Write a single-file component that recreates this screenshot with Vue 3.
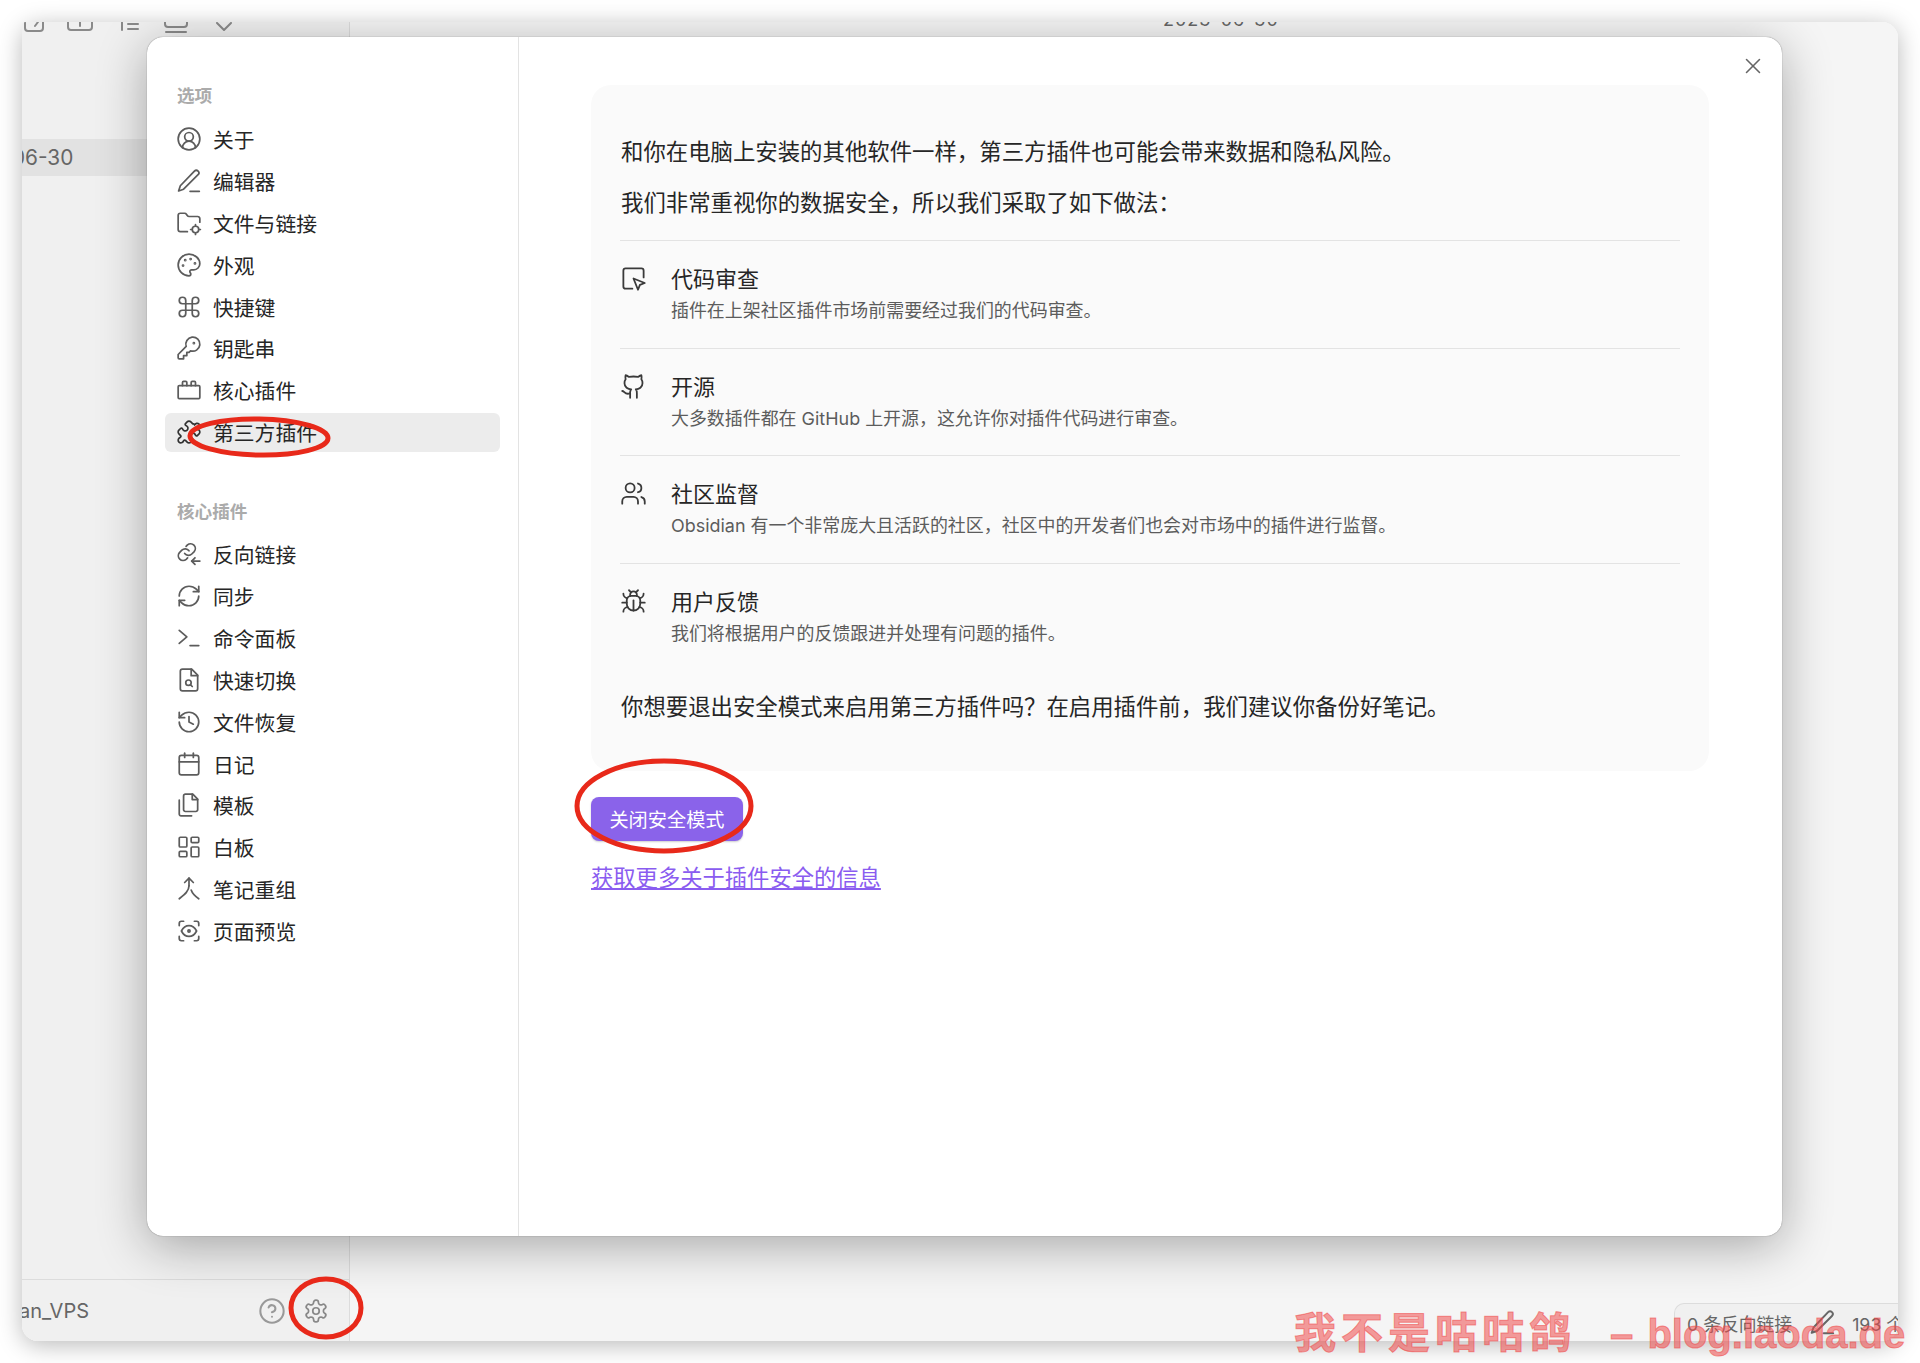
<script setup>
const icons = {
  about: '<path d="M18 20a6 6 0 0 0-12 0"/><circle cx="12" cy="10" r="4"/><circle cx="12" cy="12" r="10"/>',
  editor: '<path d="M13 21.5h8.5"/><path d="M17 2.8a2.4 2.4 0 0 1 3.4 3.4L7 19.6l-4.6 1.6L4 16.4Z"/>',
  files: '<circle cx="18" cy="18" r="3"/><path d="M10.5 20H4a2 2 0 0 1-2-2V5a2 2 0 0 1 2-2h3.9a2 2 0 0 1 1.69.9l.81 1.2a2 2 0 0 0 1.67.9H20a2 2 0 0 1 2 2v3.3"/><path d="M18 13.5V15M18 21v1.5M13.5 18H15M21 18h1.5"/>',
  palette: '<circle cx="13.5" cy="6.5" r=".5"/><circle cx="17.5" cy="10.5" r=".5"/><circle cx="8.5" cy="7.5" r=".5"/><circle cx="6.5" cy="12.5" r=".5"/><path d="M12 2C6.5 2 2 6.5 2 12s4.5 10 10 10c.926 0 1.648-.746 1.648-1.688 0-.437-.18-.835-.437-1.125-.29-.289-.438-.652-.438-1.125a1.64 1.64 0 0 1 1.668-1.668h1.996c3.051 0 5.555-2.503 5.555-5.554C21.965 6.012 17.461 2 12 2z"/>',
  command: '<path d="M15 6v12a3 3 0 1 0 3-3H6a3 3 0 1 0 3 3V6a3 3 0 1 0-3 3h12a3 3 0 1 0-3-3"/>',
  key: '<path d="M2 18v3c0 .6.4 1 1 1h4v-3h3v-3h2l1.4-1.4a6.5 6.5 0 1 0-4-4Z"/><circle cx="16.5" cy="7.5" r=".5"/>',
  core: '<path d="M3 8h18a1 1 0 0 1 1 1v10a1 1 0 0 1-1 1H3a1 1 0 0 1-1-1V9a1 1 0 0 1 1-1Z"/><path d="M6 8V5a1 1 0 0 1 1-1h2a1 1 0 0 1 1 1v3"/><path d="M14 8V5a1 1 0 0 1 1-1h2a1 1 0 0 1 1 1v3"/>',
  puzzle: '<path d="M19.439 7.85c-.049.322.059.648.289.878l1.568 1.568c.47.47.706 1.087.706 1.704s-.235 1.233-.706 1.704l-1.611 1.611a.98.98 0 0 1-.837.276c-.47-.07-.802-.48-.968-.925a2.501 2.501 0 1 0-3.214 3.214c.446.166.855.497.925.968a.979.979 0 0 1-.276.837l-1.61 1.61a2.404 2.404 0 0 1-1.705.707 2.402 2.402 0 0 1-1.704-.706l-1.568-1.568a1.026 1.026 0 0 0-.877-.29c-.493.074-.84.504-1.02.968a2.5 2.5 0 1 1-3.237-3.237c.464-.18.894-.527.967-1.02a1.026 1.026 0 0 0-.289-.877l-1.568-1.568A2.402 2.402 0 0 1 1.998 12c0-.617.236-1.234.706-1.704L4.23 8.77c.24-.24.581-.353.917-.303.515.077.877.528 1.073 1.01a2.5 2.5 0 1 0 3.259-3.259c-.482-.196-.933-.558-1.01-1.073-.05-.336.062-.676.303-.917l1.525-1.525A2.402 2.402 0 0 1 12 1.998c.617 0 1.234.236 1.704.706l1.568 1.568c.23.23.556.338.877.29.493-.074.84.504 1.02.968a2.5 2.5 0 1 1 3.237 3.237c-.464.18-.894.527-.967 1.02Z"/>',
  backlink: '<path d="M8 11.5a4.4 4.4 0 0 0 6.6.5l2.2-2.2a4.4 4.4 0 0 0-6.2-6.2L9.3 4.9"/><path d="M12 9a4.4 4.4 0 0 0-6.6-.5l-2.2 2.2a4.4 4.4 0 0 0 6.2 6.2l1.3-1.3"/><path d="M22 18.5h-7.5"/><path d="m17.5 15.5-3 3 3 3"/>',
  sync: '<path d="M3 12a9 9 0 0 1 9-9 9.75 9.75 0 0 1 6.74 2.74L21 8"/><path d="M21 3v5h-5"/><path d="M21 12a9 9 0 0 1-9 9 9.75 9.75 0 0 1-6.74-2.74L3 16"/><path d="M8 16H3v5"/>',
  terminal: '<polyline points="3 17 10 11 3 5"/><line x1="13" x2="21" y1="19" y2="19"/>',
  switcher: '<path d="M14.5 2H6a2 2 0 0 0-2 2v16a2 2 0 0 0 2 2h12a2 2 0 0 0 2-2V7.5L14.5 2z"/><polyline points="14 2 14 8 20 8"/><circle cx="11.5" cy="14.5" r="2.5"/><path d="M13.25 16.25 15 18"/>',
  history: '<path d="M3 12a9 9 0 1 0 9-9 9.75 9.75 0 0 0-6.74 2.74L3 8"/><path d="M3 3v5h5"/><path d="M12 7v5l4 2"/>',
  calendar: '<rect width="18" height="18" x="3" y="4" rx="2"/><line x1="16" x2="16" y1="2" y2="6"/><line x1="8" x2="8" y1="2" y2="6"/><line x1="3" x2="21" y1="10" y2="10"/>',
  template: '<path d="M15.5 2H8.6c-.4 0-.8.2-1.1.5-.3.3-.5.7-.5 1.1v12.8c0 .4.2.8.5 1.1.3.3.7.5 1.1.5h9.8c.4 0 .8-.2 1.1-.5.3-.3.5-.7.5-1.1V6.5L15.5 2z"/><path d="M3 7.6v12.8c0 .4.2.8.5 1.1.3.3.7.5 1.1.5h9.8"/><path d="M15 2v5h5"/>',
  canvas: '<rect width="7" height="9" x="3" y="3" rx="1"/><rect width="7" height="5" x="14" y="3" rx="1"/><rect width="7" height="9" x="14" y="12" rx="1"/><rect width="7" height="5" x="3" y="16" rx="1"/>',
  composer: '<path d="M12 2v7"/><path d="m8 6 4-4 4 4"/><path d="M12 9c0 5-4 8-9 12"/><path d="M14 13c1 3 4 6 7 8"/>',
  preview: '<path d="M3 7V5a2 2 0 0 1 2-2h2"/><path d="M17 3h2a2 2 0 0 1 2 2v2"/><path d="M21 17v2a2 2 0 0 1-2 2h-2"/><path d="M7 21H5a2 2 0 0 1-2-2v-2"/><circle cx="12" cy="12" r="1"/><path d="M5 12s2.5-5 7-5 7 5 7 5-2.5 5-7 5-7-5-7-5"/>',
  review: '<path d="M21 11V5a2 2 0 0 0-2-2H5a2 2 0 0 0-2 2v14a2 2 0 0 0 2 2h6"/><path d="m12 12 4 10 1.7-4.3L22 16Z"/>',
  github: '<path d="M15 22v-4a4.8 4.8 0 0 0-1-3.5c3 0 6-2 6-5.5.08-1.25-.27-2.48-1-3.5.28-1.15.28-2.35 0-3.5 0 0-1 0-3 1.5-2.64-.5-5.36-.5-8 0C6 2 5 2 5 2c-.3 1.15-.3 2.35 0 3.5A5.403 5.403 0 0 0 4 9c0 3.5 3 5.5 6 5.5-.39.49-.68 1.05-.85 1.65-.17.6-.22 1.23-.15 1.85v4"/><path d="M9 18c-4.51 2-5-2-7-2"/>',
  users: '<path d="M16 21v-2a4 4 0 0 0-4-4H6a4 4 0 0 0-4 4v2"/><circle cx="9" cy="7" r="4"/><path d="M22 21v-2a4 4 0 0 0-3-3.87"/><path d="M16 3.13a4 4 0 0 1 0 7.75"/>',
  bug: '<path d="m8 2 1.88 1.88"/><path d="M14.12 3.88 16 2"/><path d="M9 7.13v-1a3.003 3.003 0 1 1 6 0v1"/><path d="M12 20c-3.3 0-6-2.7-6-6v-3a4 4 0 0 1 4-4h4a4 4 0 0 1 4 4v3c0 3.3-2.7 6-6 6"/><path d="M12 20v-9"/><path d="M6.53 9C4.6 8.8 3 7.1 3 5"/><path d="M6 13H2"/><path d="M3 21c0-2.1 1.7-3.9 3.8-4"/><path d="M20.97 5c0 2.1-1.6 3.8-3.5 4"/><path d="M22 13h-4"/><path d="M17.2 17c2.1.1 3.8 1.9 3.8 4"/>',
  help: '<circle cx="12" cy="12" r="10"/><path d="M9.09 9a3 3 0 0 1 5.83 1c0 2-3 3-3 3"/><path d="M12 17h.01"/>',
  gear: '<path d="M12.22 2h-.44a2 2 0 0 0-2 2v.18a2 2 0 0 1-1 1.73l-.43.25a2 2 0 0 1-2 0l-.15-.08a2 2 0 0 0-2.73.73l-.22.38a2 2 0 0 0 .73 2.73l.15.1a2 2 0 0 1 1 1.72v.51a2 2 0 0 1-1 1.74l-.15.09a2 2 0 0 0-.73 2.73l.22.38a2 2 0 0 0 2.73.73l.15-.08a2 2 0 0 1 2 0l.43.25a2 2 0 0 1 1 1.73V20a2 2 0 0 0 2 2h.44a2 2 0 0 0 2-2v-.18a2 2 0 0 1 1-1.73l.43-.25a2 2 0 0 1 2 0l.15.08a2 2 0 0 0 2.73-.73l.22-.39a2 2 0 0 0-.73-2.73l-.15-.08a2 2 0 0 1-1-1.74v-.5a2 2 0 0 1 1-1.74l.15-.09a2 2 0 0 0 .73-2.73l-.22-.38a2 2 0 0 0-2.73-.73l-.15.08a2 2 0 0 1-2 0l-.43-.25a2 2 0 0 1-1-1.73V4a2 2 0 0 0-2-2z"/><circle cx="12" cy="12" r="3"/>',
  close: '<path d="M18 6 6 18"/><path d="m6 6 12 12"/>',
  pencil: '<path d="M13 21.5h8.5"/><path d="M17 2.8a2.4 2.4 0 0 1 3.4 3.4L7 19.6l-4.6 1.6L4 16.4Z"/>'
}

const options = [
  { label: '关于', icon: 'about' },
  { label: '编辑器', icon: 'editor' },
  { label: '文件与链接', icon: 'files' },
  { label: '外观', icon: 'palette' },
  { label: '快捷键', icon: 'command' },
  { label: '钥匙串', icon: 'key' },
  { label: '核心插件', icon: 'core' },
  { label: '第三方插件', icon: 'puzzle', active: true }
]

const corePlugins = [
  { label: '反向链接', icon: 'backlink' },
  { label: '同步', icon: 'sync' },
  { label: '命令面板', icon: 'terminal' },
  { label: '快速切换', icon: 'switcher' },
  { label: '文件恢复', icon: 'history' },
  { label: '日记', icon: 'calendar' },
  { label: '模板', icon: 'template' },
  { label: '白板', icon: 'canvas' },
  { label: '笔记重组', icon: 'composer' },
  { label: '页面预览', icon: 'preview' }
]

const safety = [
  { title: '代码审查', desc: '插件在上架社区插件市场前需要经过我们的代码审查。', icon: 'review' },
  { title: '开源', desc: '大多数插件都在 GitHub 上开源，这允许你对插件代码进行审查。', icon: 'github' },
  { title: '社区监督', desc: 'Obsidian 有一个非常庞大且活跃的社区，社区中的开发者们也会对市场中的插件进行监督。', icon: 'users' },
  { title: '用户反馈', desc: '我们将根据用户的反馈跟进并处理有问题的插件。', icon: 'bug' }
]
</script>

<template>
  <div class="page">
    <div class="window">
      <aside class="files">
        <!-- top of the toolbar is cut off by the screenshot -->
        <svg class="toolbar" viewBox="0 0 327 14">
          <path d="M3 0v6a3 3 0 0 0 3 3h12a3 3 0 0 0 3-3V0" />
          <path d="M13 4l3-4" />
          <path d="M46 0v5a3 3 0 0 0 3 3h18a3 3 0 0 0 3-3V0" />
          <path d="M58 0v4" />
          <path d="M100 0v8" />
          <path d="M106 2h10" />
          <path d="M106 7h10" />
          <path d="M143 0v2a3 3 0 0 0 3 3h16a3 3 0 0 0 3-3V0" />
          <path d="M144 10h20" />
          <path d="M195 1l7 7 7-7" />
        </svg>
        <div class="file-row"><span>06-30</span></div>
        <div class="vault">
          <span class="vault__name">an_VPS</span>
          <svg class="icon vault__help" viewBox="0 0 24 24" v-html="icons.help"></svg>
          <svg class="icon vault__gear" viewBox="0 0 24 24" v-html="icons.gear"></svg>
        </div>
      </aside>

      <main class="editor">
        <div class="editor__title">2023-06-30</div>
      </main>

      <div class="status">
        <span>0 条反向链接</span>
        <svg class="icon status__pencil" viewBox="0 0 24 24" v-html="icons.pencil"></svg>
        <span>193 个</span>
      </div>

      <!-- settings modal -->
      <section class="modal">
        <nav class="nav">
          <h4 class="nav__heading">选项</h4>
          <a
            v-for="item in options"
            :key="item.label"
            :class="['nav__item', { 'nav__item--active': item.active }]"
          >
            <svg class="icon nav__icon" viewBox="0 0 24 24" v-html="icons[item.icon]"></svg>
            <span>{{ item.label }}</span>
          </a>

          <h4 class="nav__heading nav__heading--second">核心插件</h4>
          <a v-for="item in corePlugins" :key="item.label" class="nav__item">
            <svg class="icon nav__icon" viewBox="0 0 24 24" v-html="icons[item.icon]"></svg>
            <span>{{ item.label }}</span>
          </a>
        </nav>

        <div class="content">
          <svg class="icon content__close" viewBox="0 0 24 24" v-html="icons.close"></svg>

          <div class="card">
            <p class="card__text">和你在电脑上安装的其他软件一样，第三方插件也可能会带来数据和隐私风险。</p>
            <p class="card__text card__text--second">我们非常重视你的数据安全，所以我们采取了如下做法：</p>

            <div v-for="item in safety" :key="item.title" class="point">
              <svg class="icon point__icon" viewBox="0 0 24 24" v-html="icons[item.icon]"></svg>
              <div>
                <div class="point__title">{{ item.title }}</div>
                <div class="point__desc">{{ item.desc }}</div>
              </div>
            </div>

            <p class="card__text card__text--last">你想要退出安全模式来启用第三方插件吗？在启用插件前，我们建议你备份好笔记。</p>
          </div>

          <button class="primary">关闭安全模式</button>
          <a class="more">获取更多关于插件安全的信息</a>
        </div>
      </section>
    </div>

    <svg class="marks" viewBox="0 0 1920 1363">
      <ellipse cx="259" cy="437" rx="69" ry="18" transform="rotate(1 259 437)" />
      <ellipse cx="664" cy="806" rx="87" ry="45" />
      <ellipse cx="326" cy="1308" rx="35" ry="29" />
    </svg>

    <div class="watermark"><span class="watermark__cn">我不是咕咕鸽</span><span class="watermark__dash">–</span><span class="watermark__url">blog.laoda.de</span></div>
  </div>
</template>

<style scoped>
.page {
  position: relative;
  width: 1920px;
  height: 1363px;
  padding: 22px;
  box-sizing: border-box;
  background: #fff;
  overflow: hidden;
  font-family: Inter, "Noto Sans CJK SC", sans-serif;
  color: #262626;
}

.icon {
  fill: none;
  stroke: currentColor;
  stroke-width: 1.75;
  stroke-linecap: round;
  stroke-linejoin: round;
  flex: none;
}

.window {
  position: relative;
  display: flex;
  width: 1876px;
  height: 1319px;
  border-radius: 4px 16px 16px 16px;
  background: #f3f3f3;
  overflow: hidden;
}

.page::before {
  content: "";
  position: absolute;
  left: 22px;
  top: 22px;
  width: 1876px;
  height: 1319px;
  border-radius: 16px;
  box-shadow: 0 4px 24px rgba(0, 0, 0, 0.28);
}

.files {
  display: flex;
  flex-direction: column;
  width: 328px;
  flex: none;
  background: #f0f0f0;
  border-right: 1px solid #dcdcdc;
  box-sizing: border-box;
}

.toolbar {
  display: block;
  width: 327px;
  height: 14px;
  flex: none;
  fill: none;
  stroke: #8a8a8a;
  stroke-width: 2;
  stroke-linecap: round;
  stroke-linejoin: round;
}

.file-row {
  height: 37px;
  margin-top: 103px;
  background: #e2e2e2;
  font-size: 20.8px;
  line-height: 37px;
  color: #666;
}

.file-row span {
  display: block;
  margin-left: -10px;
}

.vault {
  display: flex;
  align-items: center;
  height: 62px;
  margin-top: auto;
  border-top: 1px solid #dcdcdc;
  box-sizing: border-box;
  font-size: 20px;
  color: #666;
}

.vault__name { margin-left: -3px; }
.vault__help { width: 28px; height: 28px; margin-left: auto; margin-right: 17px; color: #999; }
.vault__gear { width: 26px; height: 26px; margin-right: 20px; color: #888; stroke-width: 1.6; }

.editor {
  flex: 1;
  background: #f5f5f5;
  overflow: hidden;
}

.editor__title {
  margin: -14px 0 0 813px;
  font-size: 18px;
  line-height: 24px;
  color: #666;
  letter-spacing: 1px;
}

.status {
  position: absolute;
  right: 0;
  bottom: 0;
  display: flex;
  align-items: center;
  width: 224px;
  height: 38px;
  padding-left: 12px;
  box-sizing: border-box;
  white-space: nowrap;
  background: #f0f0f0;
  border-top: 1px solid #dcdcdc;
  border-left: 1px solid #dcdcdc;
  border-radius: 10px 0 0 0;
  font-size: 17.8px;
  color: #666;
}

.status__pencil { width: 27px; height: 27px; margin: 0 16px 0 17px; }

.modal {
  position: absolute;
  left: 125px;
  top: 14.5px;
  display: flex;
  width: 1635px;
  height: 1199px;
  background: #fff;
  border-radius: 16px;
  box-shadow: 0 0 1px rgba(0, 0, 0, 0.6), 0 10px 50px rgba(0, 0, 0, 0.32);
  overflow: hidden;
}

.nav {
  display: flex;
  flex-direction: column;
  gap: 3.2px;
  width: 372px;
  flex: none;
  padding: 47px 18.5px 0 18px;
  box-sizing: border-box;
  border-right: 1px solid #e3e3e3;
}

.nav__heading {
  height: 24px;
  margin: 0 0 9px 12px;
  font-size: 17.6px;
  line-height: 24px;
  font-weight: 600;
  color: #ababab;
}

.nav__heading--second { margin-top: 45px; margin-bottom: 8px; }

.nav__item {
  display: flex;
  align-items: center;
  gap: 11px;
  height: 38.7px;
  padding-left: 11px;
  border-radius: 6px;
  font-size: 20.8px;
  color: #262626;
}

.nav__item--active { background: #ececec; }
.nav__item--active .nav__icon { color: #333; }

.nav__icon { width: 26px; height: 26px; color: #5c5c5c; stroke-width: 1.6; }

.content {
  position: relative;
  flex: 1;
  padding: 48px 73px 0 72px;
  display: flex;
  flex-direction: column;
  align-items: flex-start;
}

.content__close {
  position: absolute;
  top: 16px;
  right: 16px;
  width: 26px;
  height: 26px;
  color: #666;
  stroke-width: 1.4;
}

.card {
  align-self: stretch;
  padding: 52.5px 29px 49.5px;
  background: #fafafa;
  border-radius: 20px;
}

.card__text {
  margin: 0 0 0 1px;
  font-size: 22.4px;
  line-height: 30px;
  white-space: nowrap;
}

.card__text--second { margin: 21px 0 22px 1px; }
.card__text--last { margin-top: 20.8px; }

.point {
  display: flex;
  gap: 24px;
  padding: 23px 0 23.7px;
  border-top: 1px solid #e3e3e3;
}

.point__icon { width: 27px; height: 27px; margin-top: 1px; color: #3a3a3a; stroke-width: 1.6; }

.point__title {
  font-size: 22px;
  line-height: 30px;
}

.point__desc {
  margin-top: 4px;
  font-size: 17.95px;
  line-height: 26px;
  color: #5c5c5c;
}

.primary {
  width: 152px;
  height: 44px;
  margin-top: 26px;
  padding: 0;
  border: none;
  border-radius: 8px;
  background: #8a63ea;
  color: #fff;
  font: inherit;
  font-size: 19.2px;
  box-shadow: 0 1px 2px rgba(0, 0, 0, 0.2);
}

.more {
  margin-top: 22px;
  font-size: 22.3px;
  line-height: 30px;
  color: #8a5cf0;
  text-decoration: underline;
}

.marks {
  position: absolute;
  left: 0;
  top: 0;
  width: 1920px;
  height: 1363px;
  fill: none;
  stroke: #e8291a;
  stroke-width: 5;
  pointer-events: none;
}

.watermark {
  position: absolute;
  left: 1294px;
  top: 1305px;
  display: flex;
  white-space: nowrap;
  font-family: "Liberation Sans", "Noto Sans CJK SC", sans-serif;
  font-size: 42px;
  line-height: 58px;
  font-weight: 700;
  color: rgba(240, 72, 72, 0.55);
  -webkit-text-stroke: 1px rgba(240, 72, 72, 0.55);
}

.watermark__cn { letter-spacing: 5px; }
.watermark__dash { margin: 0 14px 0 34px; }
.watermark__url { font-size: 40px; }
</style>

<style>
html, body { margin: 0; background: #fff; overflow: hidden; }
</style>
